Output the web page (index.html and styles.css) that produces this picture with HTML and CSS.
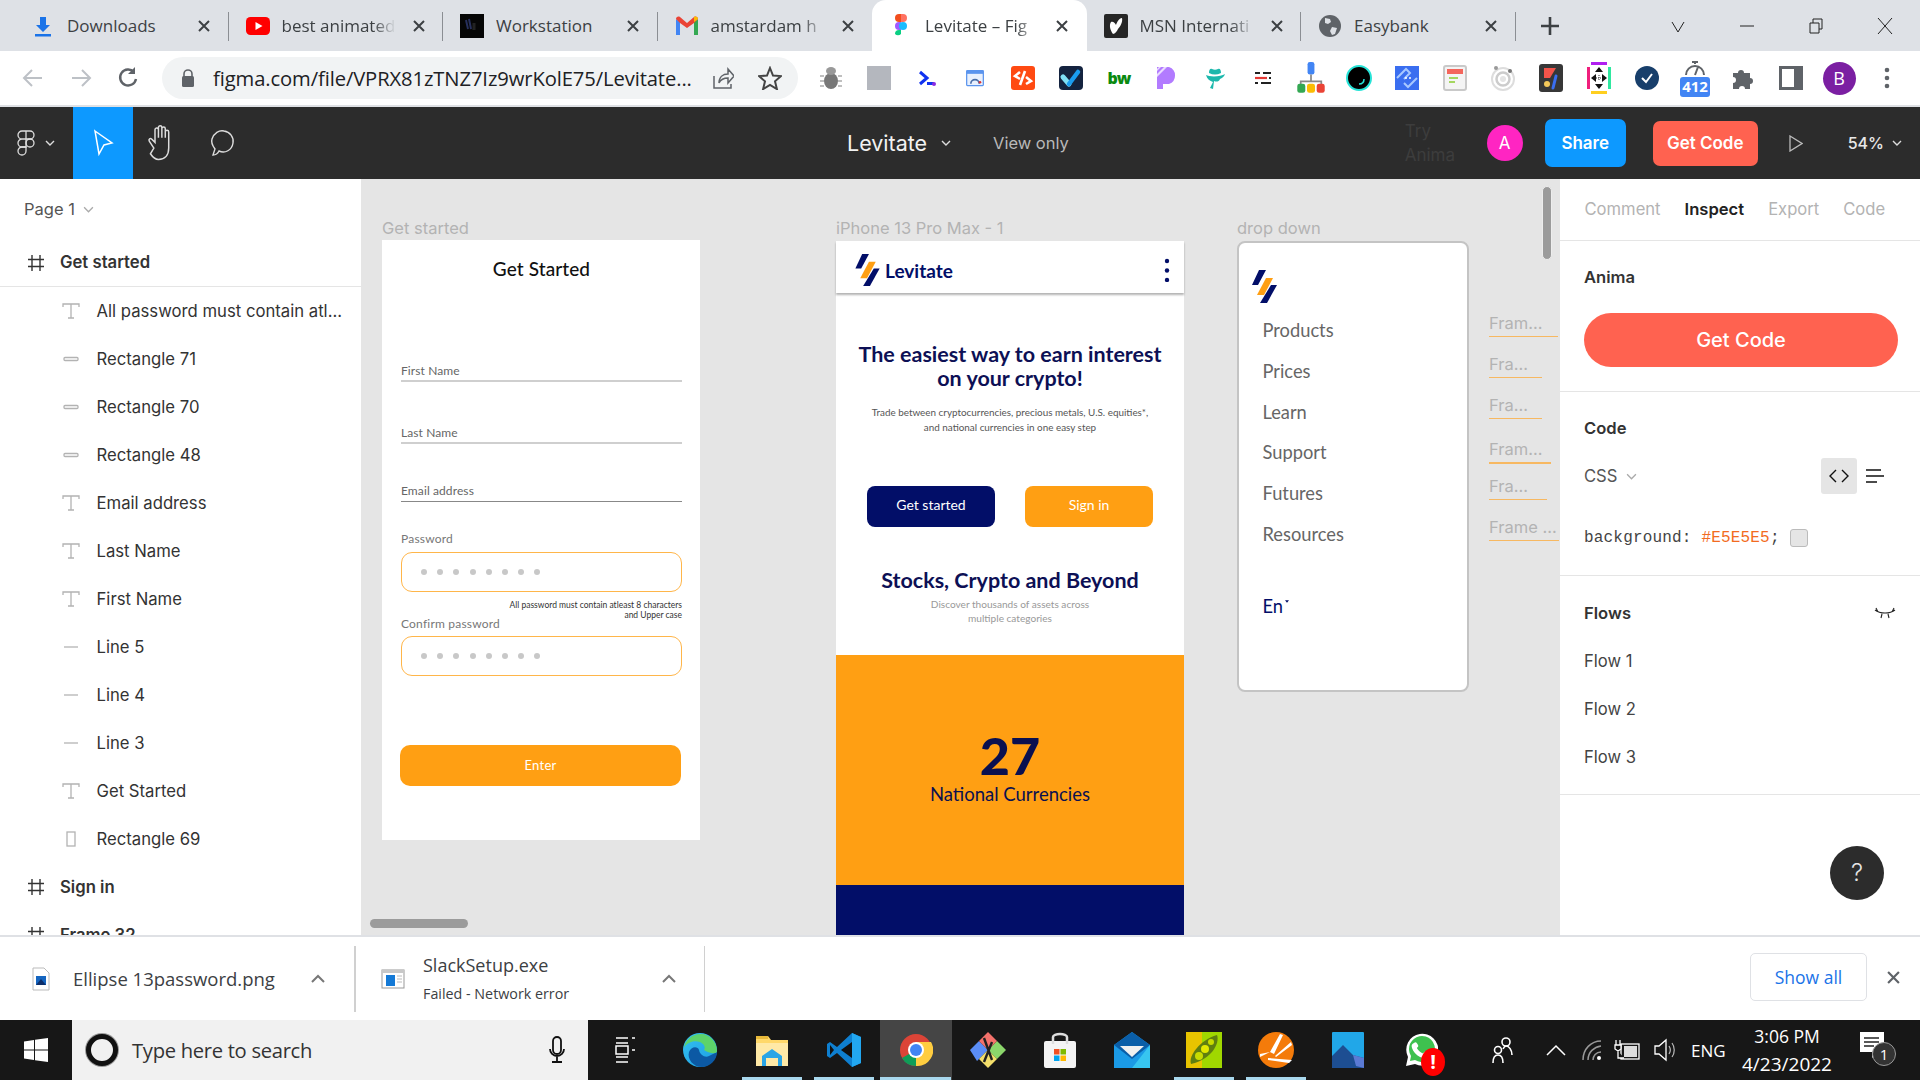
FILE: index.html
```html
<!DOCTYPE html>
<html lang="en">
<head>
<meta charset="utf-8">
<title>Levitate – Figma</title>
<link rel="stylesheet" href="styles.css">
</head>
<body>
<div class="app">

<header class="tabbar">
  <div class="tab sep"><span class="tab-ico"><svg width="24" height="24" viewBox="0 0 24 24"><path d="M9 3h6v8h4l-7 7-7-7h4z" fill="#1a73e8"/><rect x="4" y="20" width="16" height="2.5" fill="#1a73e8"/></svg></span><span class="tab-text">Downloads</span><svg class="x" viewBox="0 0 12 12"><path d="M1 1l10 10M11 1L1 11"/></svg></div>
  <div class="tab sep"><span class="tab-ico"><svg width="24" height="24" viewBox="0 0 24 24"><rect y="3" width="24" height="18" rx="4.5" fill="#f00"/><path d="M9.5 8l7 4-7 4z" fill="#fff"/></svg></span><span class="tab-text fade">best animated</span><svg class="x" viewBox="0 0 12 12"><path d="M1 1l10 10M11 1L1 11"/></svg></div>
  <div class="tab sep"><span class="tab-ico"><svg width="24" height="24" viewBox="0 0 24 24"><rect width="24" height="24" fill="#060606"/><path d="M6 6l2 9M9 5l2 10" stroke="#27305c" stroke-width="2"/><path d="M14 9v7" stroke="#222" stroke-width="3"/></svg></span><span class="tab-text">Workstation</span><svg class="x" viewBox="0 0 12 12"><path d="M1 1l10 10M11 1L1 11"/></svg></div>
  <div class="tab"><span class="tab-ico"><svg width="24" height="24" viewBox="0 0 24 24"><path d="M1 21V5l4 3v13z" fill="#4285f4"/><path d="M23 21V5l-4 3v13z" fill="#34a853"/><path d="M1 5c0-2 2-3 4-2l7 6 7-6c2-1 4 0 4 2l-4 4-7 5-7-5z" fill="#ea4335"/><path d="M19 3c2-1 4 0 4 2l-4 3z" fill="#fbbc04"/></svg></span><span class="tab-text fade">amstardam h</span><svg class="x" viewBox="0 0 12 12"><path d="M1 1l10 10M11 1L1 11"/></svg></div>
  <div class="tab active"><span class="tab-ico"><svg width="24" height="24" viewBox="0 0 16 24"><path d="M2 4a4 4 0 0 1 4-4h4v8H6a4 4 0 0 1-4-4z" fill="#f24e1e"/><path d="M8 0h2a4 4 0 0 1 0 8H8z" fill="#ff7262"/><path d="M2 12a4 4 0 0 1 4-4h2v8H6a4 4 0 0 1-4-4z" fill="#a259ff"/><circle cx="10" cy="12" r="4" fill="#1abcfe"/><path d="M2 20a4 4 0 0 1 4-4h2v4a4 4 0 0 1-6 0z" fill="#0acf83"/></svg></span><span class="tab-text fade">Levitate – Fig</span><svg class="x" viewBox="0 0 12 12"><path d="M1 1l10 10M11 1L1 11"/></svg></div>
  <div class="tab sep"><span class="tab-ico"><svg width="24" height="24" viewBox="0 0 24 24"><rect width="24" height="24" rx="2" fill="#262626"/><path d="M9 20c-3-4-4-9-2-12 2-1 4 1 5 3 1-3 3-7 6-7 1 4-2 9-4 11-1 2-3 5-5 5z" fill="#fff"/></svg></span><span class="tab-text fade">MSN Internati</span><svg class="x" viewBox="0 0 12 12"><path d="M1 1l10 10M11 1L1 11"/></svg></div>
  <div class="tab sep"><span class="tab-ico"><svg width="24" height="24" viewBox="0 0 24 24"><circle cx="12" cy="12" r="11" fill="#5f6368"/><path d="M7 4l5 1 1 3-3 2-3-1zM14 13l5 1-2 6-3 1-2-4z" fill="#dee1e6"/></svg></span><span class="tab-text">Easybank</span><svg class="x" viewBox="0 0 12 12"><path d="M1 1l10 10M11 1L1 11"/></svg></div>
  <svg class="plus" viewBox="0 0 20 20"><path d="M10 1v18M1 10h18"/></svg>
  <div class="win-controls">
    <svg viewBox="0 0 16 16"><path d="M2 4l6 10 6-10"/></svg>
    <svg viewBox="0 0 16 16"><path d="M1 8h14"/></svg>
    <svg viewBox="0 0 16 16"><path d="M2 5h9v10H2zM5 5V1h9v10h-3"/></svg>
    <svg viewBox="0 0 16 16"><path d="M1 0l14 16M15 0L1 16"/></svg>
  </div>
</header>

<nav class="toolbar">
  <div class="nav-btn"><svg viewBox="0 0 24 24" class="dim"><path d="M21 12H4M11 4l-8 8 8 8"/></svg></div>
  <div class="nav-btn"><svg viewBox="0 0 24 24" class="dim"><path d="M3 12h17M13 4l8 8-8 8"/></svg></div>
  <div class="nav-btn"><svg viewBox="0 0 24 24" class="dark"><path d="M19 13a8 8 0 1 1-2-7"/><path d="M18 1v7h-7" fill="#5f6368" stroke="none"/></svg></div>
  <div class="omnibox">
    <svg class="lock" viewBox="0 0 14 18"><path d="M3 8V5a4 4 0 0 1 8 0v3" fill="none" stroke="#5f6368" stroke-width="1.6"/><rect x="1" y="7" width="12" height="11" rx="1.5" fill="#5f6368"/></svg>
    <span class="url">figma.com/file/VPRX81zTNZ7Iz9wrKolE75/Levitate...</span>
    <svg class="omni-ico share-ico" viewBox="0 0 24 24"><path d="M4 10v12h17v-4M9 17c0-6 4-9 9-9V3l6 7-6 7v-5c-4 0-7 1-9 5z" fill="none" stroke="#5f6368" stroke-width="1.5"/></svg>
    <svg class="omni-ico star-ico" viewBox="0 0 24 24"><path d="M12 2l3 7.5 8 .6-6 5.2 1.9 7.8L12 18.900l-6.900 4.200 1.900-7.800-6-5.200 8-.6z" fill="none" stroke="#444" stroke-width="2"/></svg>
  </div>
  <div class="exts">
    <div class="ext"><svg width="24" height="24" viewBox="0 0 24 24"><ellipse cx="12" cy="15" rx="7" ry="8" fill="#777"/><ellipse cx="12" cy="5" rx="5" ry="4" fill="#999"/><path d="M1 10h4M1 15h4M1 20h4M19 10h4M19 15h4M19 20h4" stroke="#aaa" stroke-width="1.4"/></svg></div>
    <div class="ext"><span class="ext-square"></span></div>
    <div class="ext"><svg width="24" height="24" viewBox="0 0 24 24"><path d="M5 6l7 6-7 6" fill="none" stroke="#1032f0" stroke-width="3"/><rect x="12" y="16" width="7" height="3" fill="#1032f0"/><circle cx="19" cy="18" r="2" fill="#8a2be2"/></svg></div>
    <div class="ext"><svg width="20" height="20" viewBox="0 0 24 24"><path d="M2 4a1 1 0 0 1 1-1h18a1 1 0 0 1 1 1v16a1 1 0 0 1-1 1H3a1 1 0 0 1-1-1z" fill="#e8f0fd" stroke="#5a94ee" stroke-width="1.500"/><rect x="2" y="3" width="20" height="4" fill="#5a94ee"/><path d="M7 19a5 5 0 0 1 10 0" fill="none" stroke="#4a6ea8" stroke-width="2"/><circle cx="18" cy="17" r="1.500" fill="#d33"/></svg></div>
    <div class="ext"><svg width="24" height="24" viewBox="0 0 24 24"><rect width="24" height="24" rx="3" fill="#ff4a12"/><path d="M9 6L4 10l5 3M15 11l5 4-5 3M14 5L9 19" fill="none" stroke="#fff" stroke-width="2.600"/></svg></div>
    <div class="ext"><svg width="24" height="24" viewBox="0 0 24 24"><rect width="24" height="24" rx="4" fill="#14233f"/><path d="M4 11l6 7" stroke="#7fe0f6" stroke-width="5" stroke-linecap="round"/><path d="M10 18l9-12" stroke="#1a9cf0" stroke-width="4.500" stroke-linecap="round"/></svg></div>
    <div class="ext"><span class="bw">bw</span></div>
    <div class="ext"><svg width="24" height="24" viewBox="0 0 24 24"><path d="M2 1h12a9 9 0 0 1 0 17H8v5H2z" fill="#b27bff"/><path d="M2 8l7-7h3L2 11zM2 3l2-2h2L2 5z" fill="#eadcff"/></svg></div>
    <div class="ext"><svg width="24" height="24" viewBox="0 0 24 24"><path d="M3 9c3 2 15 2 19-1-1 3-3 4-5 5-1 3-4 3-6 2l-1 8-3-1 3-6c-3-1-6-3-7-7z" fill="#1cb8ac"/><path d="M6 7c0-3 1-5 3-4 2 1 4 1 6 0 2-1 3 1 3 4-4 2-8 2-12 0z" fill="#1cb8ac"/></svg></div>
    <div class="ext"><svg width="24" height="24" viewBox="0 0 24 24"><path d="M4 7h5M12 7h8M4 12h12M18 12h2M4 17h3M10 17h10" stroke="#222" stroke-width="2.200"/><path d="M4 12h12" stroke="#e53935" stroke-width="2.200"/></svg></div>
    <div class="ext"><svg width="28" height="32" viewBox="0 0 24 28"><rect x="9" y="0" width="6" height="11" rx="2" fill="#4285f4"/><path d="M12 11v6M3 21v-4h18v4" fill="none" stroke="#888" stroke-width="1.500"/><rect y="19" width="7" height="8" rx="2" fill="#34a853"/><rect x="8.500" y="19" width="7" height="8" rx="2" fill="#fbbc04"/><rect x="17" y="19" width="7" height="8" rx="2" fill="#ea4335"/></svg></div>
    <div class="ext"><svg width="26" height="26" viewBox="0 0 26 26"><circle cx="13" cy="13" r="12" fill="#000" stroke="#27e3d7" stroke-width="2"/><path d="M13 19c3 0 5-2 5-5" fill="none" stroke="#27e3d7" stroke-width="1.500"/></svg></div>
    <div class="ext"><svg width="24" height="24" viewBox="0 0 24 24"><rect width="24" height="24" fill="#3a6ef0"/><path d="M2 12l9-9 4 4-6 6M22 12l-9 9-4-4" fill="none" stroke="#a8c8ff" stroke-width="2"/><circle cx="11" cy="12" r="1" fill="#fff"/><circle cx="15" cy="12" r="1" fill="#fff"/></svg></div>
    <div class="ext"><svg width="24" height="26" viewBox="0 0 24 26"><rect x="1" y="1" width="22" height="24" rx="2" fill="#f4f4f4" stroke="#c9c9c9" stroke-width="2"/><rect x="4" y="4" width="16" height="5" fill="#f4665c"/><rect x="6" y="12" width="9" height="2" fill="#a4d65e"/><rect x="6" y="16" width="6" height="2" fill="#a4d65e"/></svg></div>
    <div class="ext"><svg width="26" height="26" viewBox="0 0 26 26"><circle cx="13" cy="14" r="11" fill="none" stroke="#ddd" stroke-width="2"/><circle cx="13" cy="14" r="6.500" fill="none" stroke="#ccc" stroke-width="2.500"/><circle cx="13" cy="14" r="3" fill="#e4e4e4"/><circle cx="6" cy="3" r="2" fill="#999"/><circle cx="20" cy="6" r="2" fill="#777"/></svg></div>
    <div class="ext"><svg width="24" height="28" viewBox="0 0 24 28"><rect width="24" height="28" rx="3" fill="#373737"/><path d="M5 4h12l-6 10H5z" fill="#f4544a"/><circle cx="8" cy="20" r="3" fill="#f4c95a"/><path d="M17 12l-3 12" stroke="#3a6ef0" stroke-width="3" stroke-linecap="round"/></svg></div>
    <div class="ext"><svg width="24" height="32" viewBox="0 0 24 32"><rect x="4" y="0" width="16" height="3" fill="#b01ff0"/><rect x="4" y="29" width="16" height="3" fill="#ffcf1f"/><rect x="0" y="5" width="3" height="22" fill="#f01f7c"/><rect x="21" y="5" width="3" height="22" fill="#2fe8a0"/><path d="M12 5l4 5H8zM12 27l4-5H8zM4 16l5-4v8zM20 16l-5-4v8z" fill="#111"/><path d="M9 16h6M12 13v6" stroke="#333" stroke-dasharray="1 1"/></svg></div>
    <div class="ext"><svg width="24" height="24" viewBox="0 0 24 24"><circle cx="12" cy="12" r="12" fill="#183f6b"/><path d="M7 12l4 4 6-8" fill="none" stroke="#fff" stroke-width="2"/></svg></div>
    <div class="ext ext-badge"><svg width="24" height="16" viewBox="0 0 24 16"><path d="M9 1h6M12 1v2M3 14a9 9 0 0 1 18 0M12 14l3-8" fill="none" stroke="#5f6368" stroke-width="2"/></svg><span class="badge">412</span></div>
    <div class="ext"><svg width="24" height="24" viewBox="0 0 24 24"><path d="M2 7h5a3 3 0 1 1 6 0h6v5a3 3 0 1 1 0 6v5h-5a3 3 0 1 0-6 0H2v-6a3 3 0 1 0 0-6z" fill="#5f6368"/></svg></div>
    <div class="ext"><svg width="24" height="24" viewBox="0 0 24 24"><path d="M1.500 1.500h21v21h-21z" fill="none" stroke="#5f6368" stroke-width="3"/><rect x="15" y="2" width="8" height="20" fill="#5f6368"/></svg></div>
    <div class="ext"><span class="avatar-b">B</span></div>
    <div class="ext"><svg width="6" height="24" viewBox="0 0 6 24"><circle cx="3" cy="4" r="2.300" fill="#5f6368"/><circle cx="3" cy="12" r="2.300" fill="#5f6368"/><circle cx="3" cy="20" r="2.300" fill="#5f6368"/></svg></div>
  </div>
</nav>

<div class="figbar">
  <div class="fig-logo">
    <svg width="18" height="26" viewBox="0 0 18 26"><g fill="none" stroke="#ddd" stroke-width="1.300"><path d="M9 1H5a4 4 0 0 0 0 8h4zM9 1h4a4 4 0 0 1 0 8H9zM9 9H5a4 4 0 0 0 0 8h4z"/><circle cx="13" cy="13" r="4"/><path d="M9 17H5a4 4 0 1 0 4 4z"/></g></svg>
    <svg class="chev" viewBox="0 0 10 6"><path d="M1 1l4 4 4-4"/></svg>
  </div>
  <div class="fig-tool on"><svg width="24" height="28" viewBox="0 0 24 28"><path d="M4 2l17 12-8 2-5 9z" fill="none" stroke="#fff" stroke-width="1.500"/></svg></div>
  <div class="fig-tool"><svg width="32" height="39" viewBox="0 0 28 34"><path d="M6 21l-4-6c-1-2 1-3 2-2l3 3V5c0-2 3-2 3 0v7-9c0-2 3-2 3 0v9-8c0-2 3-2 3 0v8-5c0-2 3-2 3 0v14c0 6-3 10-9 10-3 0-5-2-7-5z" fill="none" stroke="#ddd" stroke-width="1.300"/></svg></div>
  <div class="fig-tool"><svg width="28" height="30" viewBox="0 0 28 30"><path d="M4 27l2-6C3 17 2 14 3 11 5 5 10 2 15 3c6 1 10 6 9 12-1 7-8 11-14 8-1 2-3 4-6 4z" fill="none" stroke="#ddd" stroke-width="1.400"/></svg></div>
  <div class="fig-title">Levitate</div>
  <svg class="chev title-chev" viewBox="0 0 10 6"><path d="M1 1l4 4 4-4"/></svg>
  <div class="view-only">View only</div>
  <div class="fig-right">
    <div class="try">Try<br>Anima</div>
    <div class="avatar-a">A</div>
    <div class="btn-share">Share</div>
    <div class="btn-code">Get Code</div>
    <svg class="play" viewBox="0 0 14 17"><path d="M1 1l12 7.500L1 16z"/></svg>
    <div class="zoom-val">54%</div>
    <svg class="chev zoom-chev" viewBox="0 0 10 6"><path d="M1 1l4 4 4-4"/></svg>
  </div>
</div>

<main class="main">
  <aside class="layers">
    <div class="page-row">Page 1 <svg class="chev-g" viewBox="0 0 10 6"><path d="M1 1l4 4 4-4"/></svg></div>
    <div class="row top sel"><svg class="hash" viewBox="0 0 18 18"><path d="M5 1v16M13 1v16M1 5.500h16M1 12.500h16"/></svg>Get started</div>
    <div class="row"><svg class="ic-t" viewBox="0 0 18 18"><path d="M1 5V2h16v3M9 2v14M6 16h6"/></svg>All password must contain atl...</div>
    <div class="row"><svg class="ic-t" viewBox="0 0 18 18"><rect x="2" y="7.500" width="14" height="3" rx="1"/></svg>Rectangle 71</div>
    <div class="row"><svg class="ic-t" viewBox="0 0 18 18"><rect x="2" y="7.500" width="14" height="3" rx="1"/></svg>Rectangle 70</div>
    <div class="row"><svg class="ic-t" viewBox="0 0 18 18"><rect x="2" y="7.500" width="14" height="3" rx="1"/></svg>Rectangle 48</div>
    <div class="row"><svg class="ic-t" viewBox="0 0 18 18"><path d="M1 5V2h16v3M9 2v14M6 16h6"/></svg>Email address</div>
    <div class="row"><svg class="ic-t" viewBox="0 0 18 18"><path d="M1 5V2h16v3M9 2v14M6 16h6"/></svg>Last Name</div>
    <div class="row"><svg class="ic-t" viewBox="0 0 18 18"><path d="M1 5V2h16v3M9 2v14M6 16h6"/></svg>First Name</div>
    <div class="row"><svg class="ic-t" viewBox="0 0 18 18"><path d="M2 9h14"/></svg>Line 5</div>
    <div class="row"><svg class="ic-t" viewBox="0 0 18 18"><path d="M2 9h14"/></svg>Line 4</div>
    <div class="row"><svg class="ic-t" viewBox="0 0 18 18"><path d="M2 9h14"/></svg>Line 3</div>
    <div class="row"><svg class="ic-t" viewBox="0 0 18 18"><path d="M1 5V2h16v3M9 2v14M6 16h6"/></svg>Get Started</div>
    <div class="row"><svg class="ic-t" viewBox="0 0 18 18"><rect x="5" y="2" width="8" height="14"/></svg>Rectangle 69</div>
    <div class="row top"><svg class="hash" viewBox="0 0 18 18"><path d="M5 1v16M13 1v16M1 5.500h16M1 12.500h16"/></svg>Sign in</div>
    <div class="row top"><svg class="hash" viewBox="0 0 18 18"><path d="M5 1v16M13 1v16M1 5.500h16M1 12.500h16"/></svg>Frame 32</div>
  </aside>

  <section class="canvas">
    <div class="lbl lbl-a">Get started</div>
    <div class="frame-a">
      <div class="a-title">Get Started</div>
      <div class="field f-first">First Name</div>
      <div class="field f-last">Last Name</div>
      <div class="field f-email">Email address</div>
      <div class="pw-label">Password</div>
      <div class="pw"><i></i><i></i><i></i><i></i><i></i><i></i><i></i><i></i></div>
      <div class="pw-note">All password must contain atleast 8 characters<br>and Upper case</div>
      <div class="pw-label confirm">Confirm password</div>
      <div class="pw"><i></i><i></i><i></i><i></i><i></i><i></i><i></i><i></i></div>
      <div class="enter">Enter</div>
    </div>

    <div class="lbl lbl-b">iPhone 13 Pro Max - 1</div>
    <div class="frame-b">
      <div class="p-head">
        <svg class="logo" viewBox="0 0 25 33"><path d="M7 0h7L6 15H0z" fill="#020e68"/><path d="M14 8h7L12 25H5z" fill="#ff9f13"/><path d="M19 15h6L15 33H8z" fill="#020e68"/></svg>
        <span class="p-brand">Levitate</span>
        <svg class="kebab" viewBox="0 0 6 24"><circle cx="3" cy="3" r="2.200"/><circle cx="3" cy="12.500" r="2.200"/><circle cx="3" cy="22" r="2.200"/></svg>
      </div>
      <h1 class="p-h1">The easiest way to earn interest<br>on your crypto!</h1>
      <p class="p-sub">Trade between cryptocurrencies, precious metals, U.S. equities*,<br>and national currencies in one easy step</p>
      <div class="p-btns"><div class="p-btn navy">Get started</div><div class="p-btn orange">Sign in</div></div>
      <h2 class="p-h2">Stocks, Crypto and Beyond</h2>
      <p class="p-sub2">Discover thousands of assets across<br>multiple categories</p>
      <div class="p-orange"><div class="p-num">27</div><div class="p-cur">National Currencies</div></div>
      <div class="p-navy"></div>
    </div>

    <div class="lbl lbl-c">drop down</div>
    <div class="frame-c">
      <svg class="logo2" viewBox="0 0 25 33"><path d="M7 0h7L6 15H0z" fill="#020e68"/><path d="M14 8h7L12 25H5z" fill="#ff9f13"/><path d="M19 15h6L15 33H8z" fill="#020e68"/></svg>
      <div class="menu-item">Products</div>
      <div class="menu-item">Prices</div>
      <div class="menu-item">Learn</div>
      <div class="menu-item">Support</div>
      <div class="menu-item">Futures</div>
      <div class="menu-item">Resources</div>
      <div class="lang">En<svg viewBox="0 0 6 4"><path d="M0 0h6L3 4z"/></svg></div>
    </div>

    <div class="mini m1">Fram...</div>
    <div class="mini m2">Fra...</div>
    <div class="mini m3">Fra...</div>
    <div class="mini m4">Fram...</div>
    <div class="mini m5">Fra...</div>
    <div class="mini m6">Frame ...</div>

    <div class="vscroll"></div>
    <div class="hscroll"></div>
  </section>

  <aside class="inspect">
    <div class="i-tabs"><span>Comment</span><span class="cur">Inspect</span><span>Export</span><span>Code</span></div>
    <div class="i-sec anima">
      <div class="i-h">Anima</div>
      <div class="i-cta">Get Code</div>
    </div>
    <div class="i-sec code">
      <div class="i-h">Code</div>
      <div class="css-row">
        <span class="css-name">CSS</span><svg class="chev-g" viewBox="0 0 10 6"><path d="M1 1l4 4 4-4"/></svg>
        <span class="code-btn"><svg width="20" height="14" viewBox="0 0 20 14"><path d="M7 1L1 7l6 6M13 1l6 6-6 6" fill="none" stroke="#111" stroke-width="1.400"/></svg></span>
        <svg class="list-ic" width="18" height="14" viewBox="0 0 18 14"><path d="M0 1h15M0 7h18M0 13h11" stroke="#111" stroke-width="1.400"/></svg>
      </div>
      <div class="code-line">background: <span class="hex">#E5E5E5</span>;<i class="swatch"></i></div>
    </div>
    <div class="i-sec flows">
      <div class="flows-head"><span class="i-h">Flows</span><svg width="22" height="12" viewBox="0 0 22 12"><path d="M1 3c5 4 15 4 20 0M4 5L2 1M8 7l-1 4M14 7l1 4M18 5l2-4" fill="none" stroke="#222" stroke-width="1.100"/></svg></div>
      <div class="flow">Flow 1</div>
      <div class="flow">Flow 2</div>
      <div class="flow">Flow 3</div>
    </div>
    <div class="help">?</div>
  </aside>
</main>

<footer class="dlbar">
  <div class="dl d1">
    <svg width="18" height="24" viewBox="0 0 18 24"><path d="M1 1h11l5 5v17H1z" fill="#fff" stroke="#bbb"/><rect x="4" y="9" width="10" height="9" fill="#1565c0"/><path d="M4 18l5-6 5 6z" fill="#0d2f6b"/></svg>
    <span class="dl-name">Ellipse 13password.png</span>
    <svg class="caret" viewBox="0 0 14 9"><path d="M1 8l6-6 6 6"/></svg>
  </div>
  <div class="dl d2">
    <svg width="24" height="20" viewBox="0 0 24 20"><rect x="1" y="1" width="22" height="18" fill="#fff" stroke="#999"/><rect x="1" y="1" width="22" height="3" fill="#c8c8c8"/><rect x="5" y="6" width="9" height="11" fill="#1479d6"/><path d="M16 7h5M16 10h5M16 13h5" stroke="#bbb"/></svg>
    <div class="dl-text"><div class="dl-name2">SlackSetup.exe</div><div class="dl-err">Failed - Network error</div></div>
    <svg class="caret" viewBox="0 0 14 9"><path d="M1 8l6-6 6 6"/></svg>
  </div>
  <div class="show-all">Show all</div>
  <svg class="dl-x" viewBox="0 0 12 12"><path d="M1 1l10 10M11 1L1 11"/></svg>
</footer>

<footer class="taskbar">
  <div class="start"><svg width="24" height="24" viewBox="0 0 24 24"><path d="M0 3.500l10-1.500v9.500H0zM11 1.800L24 0v11.500H11zM0 12.500h10V22L0 20.500zM11 12.500h13V24l-13-1.800z" fill="#fff"/></svg></div>
  <div class="search">
    <span class="cortana"></span>
    <span class="search-text">Type here to search</span>
    <svg class="mic" width="16" height="28" viewBox="0 0 16 28"><rect x="4" y="1" width="8" height="17" rx="4" fill="none" stroke="#111" stroke-width="1.800"/><path d="M1 13a7 7 0 0 0 14 0M8 20v5M3 26h10" fill="none" stroke="#111" stroke-width="1.800"/></svg>
  </div>
  <div class="task-view"><svg width="24" height="26" viewBox="0 0 24 26"><path d="M2 1h12M2 6h12M2 20h12M2 25h12M2 9h12v8H2z M18 1h3M18 13h3" fill="none" stroke="#fff" stroke-width="1.500"/></svg></div>
  <div class="app-ic"><svg width="36" height="36" viewBox="0 0 36 36"><defs><linearGradient id="e1" x1="0" y1="0" x2="1" y2="1"><stop offset="0" stop-color="#35c1f1"/><stop offset="1" stop-color="#1b9de2"/></linearGradient></defs><circle cx="18" cy="18" r="17" fill="url(#e1)"/><path d="M35 20c0 8-7 15-15 15-9 0-15-8-13-15 2-6 9-6 10-2 1 5 6 8 10 6z" fill="#0c59a4"/><path d="M35 19c0-9-7-17-16-17C9 2 3 9 2 16c3-6 10-8 16-6 4 2 6 5 4 8 4 3 13 5 13 1z" fill="#5dd36b"/></svg></div>
  <div class="app-ic line"><svg width="36" height="32" viewBox="0 0 36 32"><path d="M2 2h12l3 4h17v26H2z" fill="#ffd86a"/><rect x="2" y="9" width="32" height="23" fill="#ffe9a6"/><path d="M8 22l10-7 10 7v10H24v-8H12v8H8z" fill="#2aa5e6"/><rect x="2" y="2" width="12" height="3" fill="#e8b93a"/></svg></div>
  <div class="app-ic line"><svg width="36" height="36" viewBox="0 0 36 36"><path d="M26 1l9 4v26l-9 4-15-14-7 5-3-2V12l3-2 7 5z" fill="#0e7fd0"/><path d="M26 1v34l9-4V5z" fill="#22a7f0"/><path d="M26 10L15 18l11 8z" fill="#111"/><path d="M4 13v10l4-5z" fill="#111"/></svg></div>
  <div class="app-ic cur line"><svg width="34" height="34" viewBox="0 0 34 34"><circle cx="17" cy="17" r="16" fill="#db4437"/><path d="M17 17L3 25A16 16 0 0 0 17 33z" fill="#0f9d58"/><path d="M17 9h15a16 16 0 0 1-15 24z" fill="#ffcd40"/><circle cx="17" cy="17" r="8" fill="#fff"/><circle cx="17" cy="17" r="6" fill="#4285f4"/></svg></div>
  <div class="app-ic"><svg width="36" height="36" viewBox="0 0 36 36"><path d="M18 18L7 29 0 18l9-9z" fill="#5b8df6"/><path d="M18 18l9-9 9 9-9 9z" fill="#8bd66b"/><path d="M18 18L9 9l9-9 9 9z" fill="#f4716b"/><path d="M18 18l-9 9 9 9 9-9z" fill="#f4df6b"/><path d="M14 6l8 22M22 10l-8 20" stroke="#222" stroke-width="2.400"/></svg></div>
  <div class="app-ic"><svg width="34" height="36" viewBox="0 0 34 36"><rect x="1" y="9" width="32" height="27" rx="2" fill="#f4f4f4"/><path d="M10 12V5a7 3 0 0 1 14 0v7" fill="none" stroke="#ddd" stroke-width="2.500"/><rect x="11" y="17" width="5.500" height="5.500" fill="#f25022"/><rect x="17.500" y="17" width="5.500" height="5.500" fill="#7fba00"/><rect x="11" y="23.500" width="5.500" height="5.500" fill="#00a4ef"/><rect x="17.500" y="23.500" width="5.500" height="5.500" fill="#ffb900"/></svg></div>
  <div class="app-ic"><svg width="36" height="36" viewBox="0 0 36 36"><path d="M18 0L0 13v23h36V13z" fill="#1b9ae6"/><path d="M0 13l18 14 18-14L18 0z" fill="#0a5ea8"/><path d="M6 14h24L18 25z" fill="#f0f0f0"/><path d="M18 36l18-23v23z" fill="#37c5f0"/></svg></div>
  <div class="app-ic line2"><svg width="36" height="36" viewBox="0 0 36 36"><rect width="36" height="36" fill="#a0d800"/><rect width="16" height="36" fill="#e8c400"/><path d="M5 32C2 24 14 8 31 3c3 8-5 24-26 29z" fill="#5f7f10"/><circle cx="13" cy="24" r="4" fill="#c8dc00"/><circle cx="19" cy="17" r="4" fill="#e2e800"/><circle cx="25" cy="10" r="3" fill="#c8dc00"/></svg></div>
  <div class="app-ic line2"><svg width="36" height="36" viewBox="0 0 36 36"><ellipse cx="18" cy="18" rx="18" ry="18" fill="#f47b0a"/><path d="M12 20L22 2l3 1-9 19zM17 24L33 10l1 3-16 12zM10 26l24 2-3 3-21-3zM2 22l10-2-10 5z" fill="#fff"/></svg></div>
  <div class="app-ic"><svg width="32" height="36" viewBox="0 0 32 36"><rect width="32" height="36" rx="1" fill="#21a7e8"/><path d="M0 36V24L11 13l10 10 11 3v10z" fill="#1d4e92"/><path d="M21 23l11 3v10l-8-2z" fill="#5b7ad4"/></svg></div>
  <div class="app-ic wa"><svg width="36" height="36" viewBox="0 0 36 36"><path d="M4 34l2-9A16 16 0 1 1 13 32z" fill="#fff"/><path d="M8 29l1-5A13 13 0 1 1 13 28z" fill="#3ec14f"/><path d="M12 11c2-2 3 0 4 2s-1 2-1 3 3 4 5 5 2-2 3-1 4 2 3 4-4 3-8 1-7-6-8-9 0-4 2-5z" fill="#fff"/></svg><span class="wa-alert">!</span></div>
  <div class="tray">
    <svg class="t-people" width="24" height="28" viewBox="0 0 24 28"><circle cx="15" cy="6" r="4" fill="none" stroke="#fff" stroke-width="1.600"/><circle cx="7" cy="14" r="3.500" fill="none" stroke="#fff" stroke-width="1.600"/><path d="M2 27c0-5 2-8 5-8s5 3 5 8M12 13c1-2 2-3 3-3 3 0 6 4 6 9" fill="none" stroke="#fff" stroke-width="1.600"/></svg>
    <svg class="t-caret" width="20" height="12" viewBox="0 0 20 12"><path d="M1 11l9-9 9 9" fill="none" stroke="#fff" stroke-width="1.500"/></svg>
    <svg class="t-wifi" width="22" height="22" viewBox="0 0 22 22"><path d="M2 21C2 10 10 2 20 2M7 21c0-8 6-13 13-14M12 21c0-4 3-8 8-8" fill="none" stroke="#999" stroke-width="1.500"/><circle cx="18" cy="19" r="2" fill="#fff"/></svg>
    <svg class="t-batt" width="26" height="22" viewBox="0 0 26 22"><rect x="7" y="5" width="18" height="15" fill="none" stroke="#fff" stroke-width="1.300"/><rect x="10" y="7" width="13" height="11" fill="#fff" opacity=".85"/><path d="M2 1v5M6 1v5M1 6h6v4l-3 2-3-2zM4 12v7h6" fill="#111" stroke="#fff" stroke-width="1.300"/></svg>
    <svg class="t-vol" width="24" height="24" viewBox="0 0 24 24"><path d="M1 8h4l7-6v20l-7-6H1z" fill="none" stroke="#fff" stroke-width="1.300"/><path d="M15 8c2 3 2 5 0 8M18 5c3 4 3 10 0 14" fill="none" stroke="#bbb" stroke-width="1.200"/></svg>
    <span class="t-lang">ENG</span>
    <div class="t-clock"><div>3:06 PM</div><div class="t-date">4/23/2022</div></div>
    <div class="t-notif"><svg width="24" height="30" viewBox="0 0 24 30"><path d="M0 0h24v20h-6l-6 6v-6H0z" fill="#fff"/><path d="M4 6h15M4 10h15M4 14h10" stroke="#222" stroke-width="1.400"/></svg><span class="t-count">1</span></div>
  </div>
</footer>

</div>
</body>
</html>
```

FILE: styles.css
```css
* { box-sizing: border-box; }
html, body { margin: 0; padding: 0; background: #fff; }
.app { width: 1920px; height: 1080px; display: flex; flex-direction: column; overflow: hidden; font-family: Inter, "Liberation Sans", sans-serif; }

/* browser tabs */
.tabbar { height: 51px; background: #dee1e6; display: flex; align-items: center; padding-left: 14px; flex: none; }
.tab { width: 214.5px; height: 51px; display: flex; align-items: center; padding-left: 17px; position: relative; flex: none; }
.tab.sep::after { content: ""; position: absolute; right: 0; top: 12px; height: 29px; width: 1px; background: #8b8e93; }
.tab.active { background: #fff; border-radius: 14px 14px 0 0; }
.tab-ico { width: 24px; height: 24px; flex: none; display: flex; }
.tab-text { width: 114px; margin-left: 12px; white-space: nowrap; overflow: hidden; font: 17px "Open Sans", sans-serif; color: #3c4043; flex: none; }
.tab-text.fade { -webkit-mask-image: linear-gradient(90deg, #000 80%, transparent 100%); mask-image: linear-gradient(90deg, #000 80%, transparent 100%); }
.x { width: 12px; height: 12px; margin-left: 17px; flex: none; }
.x path { stroke: #3c4043; stroke-width: 2; fill: none; }
.plus { width: 20px; height: 20px; margin-left: 24px; flex: none; }
.plus path { stroke: #3c4043; stroke-width: 2.6; fill: none; }
.win-controls { margin-left: auto; display: flex; align-items: center; gap: 53px; padding-right: 27px; }
.win-controls svg { width: 16px; height: 16px; }
.win-controls path { fill: none; stroke: #222; stroke-width: 1; }

/* address bar */
.toolbar { height: 56px; flex: none; display: flex; align-items: center; background: #fff; border-bottom: 2px solid #dfe1e5; }
.nav-btn { width: 48px; height: 48px; flex: none; display: flex; align-items: center; justify-content: center; }
.nav-btn:first-child { margin-left: 9px; }
.nav-btn svg { width: 24px; height: 24px; fill: none; stroke-width: 2; }
.nav-btn .dim { stroke: #bdc1c6; }
.nav-btn .dark { stroke: #5f6368; stroke-width: 2.4; }
.omnibox { margin-left: 9px; width: 636px; height: 42px; background: #f1f3f4; border-radius: 21px; display: flex; align-items: center; padding-left: 19px; flex: none; }
.lock { width: 14px; height: 18px; flex: none; }
.url { margin-left: 18px; width: 484px; font: 20.2px "Open Sans", sans-serif; color: #202124; white-space: nowrap; overflow: hidden; flex: none; letter-spacing: -0.1px; }
.omni-ico { width: 24px; height: 24px; flex: none; }
.share-ico { margin-left: 13px; }
.star-ico { margin-left: 24px; }
.exts { margin-left: 9px; display: flex; flex: none; }
.ext { width: 48px; height: 48px; display: flex; align-items: center; justify-content: center; flex: none; }
.ext-square { width: 24px; height: 24px; background: #b4b7be; }
.bw { font: 800 16px/1 "Open Sans", sans-serif; color: #0a8a10; letter-spacing: -1px; }
.ext-badge { flex-direction: column; justify-content: flex-start; padding-top: 7px; }
.badge { background: #4285f4; color: #fff; font: 700 15px/19px "Open Sans", sans-serif; width: 30px; height: 20px; text-align: center; border-radius: 3px; }
.avatar-b { width: 33px; height: 33px; border-radius: 50%; background: #7b1fa2; color: #fff; font: 18px/33px "Open Sans", sans-serif; text-align: center; }

/* figma bar */
.figbar { height: 72px; flex: none; background: #2c2c2c; display: flex; align-items: center; }
.fig-logo { width: 73px; height: 72px; display: flex; align-items: center; padding-left: 17px; gap: 10px; flex: none; }
.chev { width: 10px; height: 6px; flex: none; }
.chev path { fill: none; stroke: #ddd; stroke-width: 1.4; }
.fig-tool { width: 60px; height: 72px; display: flex; align-items: center; justify-content: center; flex: none; }
.fig-tool.on { background: #0d99ff; }
.fig-title { margin-left: 594px; font-size: 21.5px; color: #f2f2f2; width: 85px; }
.title-chev { margin-left: 9px; }
.view-only { margin-left: 42px; font-size: 16.5px; color: #b9b9b9; }
.fig-right { margin-left: auto; display: flex; align-items: center; height: 72px; }
.try { color: #3d3d3d; font-size: 17px; line-height: 24px; width: 82px; margin-left: 2px; }
.avatar-a { width: 36px; height: 36px; border-radius: 50%; background: #ff25c2; color: #fff; text-align: center; font-size: 17px; line-height: 36px; }
.btn-share { margin-left: 22px; width: 81px; height: 48px; background: #0d99ff; border-radius: 7px; color: #fff; font-size: 17px; font-weight: 600; line-height: 48px; text-align: center; }
.btn-code { margin-left: 27px; width: 105px; height: 45px; background: #ff6250; border-radius: 7px; color: #fff; font-size: 17px; font-weight: 600; line-height: 45px; text-align: center; }
.play { width: 14px; height: 17px; margin-left: 31px; }
.play path { fill: none; stroke: #bbb; stroke-width: 1.3; }
.zoom-val { margin-left: 45px; font-size: 16px; color: #e8e8e8; font-weight: 500; }
.zoom-chev { margin-left: 8px; margin-right: 18px; }

/* main */
.main { height: 756px; flex: none; display: flex; position: relative; overflow: hidden; }
.layers { width: 361px; flex: none; background: #fff; overflow: hidden; }
.page-row { height: 60px; display: flex; align-items: center; padding-left: 24px; font-size: 16.5px; color: #555; gap: 8px; }
.chev-g { width: 11px; height: 7px; flex: none; }
.chev-g path { fill: none; stroke: #aaa; stroke-width: 1.2; }
.row { height: 48px; display: flex; align-items: center; padding-left: 96.5px; font-size: 16.7px; color: #333; position: relative; white-space: nowrap; }
.row .ic-t { position: absolute; left: 62px; top: 15px; width: 18px; height: 18px; fill: none; stroke: #b3b3b3; stroke-width: 1.3; }
.row.top { padding-left: 60px; font-weight: 600; color: #333; }
.row.sel { border-bottom: 1px solid #e5e5e5; padding-bottom: 2px; }
.hash { position: absolute; left: 27px; top: 15px; width: 18px; height: 18px; fill: none; stroke: #333; stroke-width: 1.4; }

/* canvas */
.canvas { flex: 1; background: #e5e5e5; position: relative; overflow: hidden; font-family: Lato, "Open Sans", sans-serif; }
.lbl { position: absolute; font: 16.5px/20px Inter, sans-serif; color: #b3b3b3; white-space: nowrap; }
.lbl-a { left: 21px; top: 39px; }
.lbl-b { left: 475px; top: 39px; }
.lbl-c { left: 876px; top: 39px; }

.frame-a { position: absolute; left: 21px; top: 61px; width: 318px; height: 600px; background: #fff; padding: 17px 18px 0 19px; }
.a-title { text-align: center; font-size: 19px; line-height: 24px; color: #111; font-weight: 500; letter-spacing: .1px; }
.field { font-size: 12px; line-height: 16px; color: #666; letter-spacing: .1px; height: 19px; border-bottom: 2px solid #cfcfcf; }
.f-first { margin-top: 82px; }
.f-last { margin-top: 43px; }
.f-email { margin-top: 39px; border-bottom: 1px solid #888; }
.pw-label { font-size: 12px; line-height: 16px; color: #777; letter-spacing: .2px; margin-top: 29px; }
.pw-label.confirm { margin-top: -4px; }
.pw { height: 40px; margin-top: 5px; border: 1px solid #ffb64a; border-radius: 11px; display: flex; align-items: center; padding-left: 19px; gap: 10.2px; }
.confirm + .pw { margin-top: 4px; }
.pw i { width: 6px; height: 6px; border-radius: 50%; background: #c8c8c8; }
.pw-note { margin-top: 8px; text-align: right; font-size: 8.5px; line-height: 10px; color: #333; white-space: nowrap; }
.enter { margin: 69px 1px 0 -1px; height: 41px; background: #ff9f13; border-radius: 10px; color: #fff; font-size: 13px; line-height: 41px; text-align: center; letter-spacing: .3px; }

.frame-b { position: absolute; left: 475px; top: 62px; width: 348px; height: 760px; background: #fff; color: #0d1055; text-align: center; }
.p-head { height: 52px; background: #fff; display: flex; align-items: center; padding: 6px 0 0 19px; box-shadow: 0 2px 2px rgba(0, 0, 0, .3); }
.logo { width: 25px; height: 32px; flex: none; }
.p-brand { margin-left: 5px; font-size: 19px; font-weight: 700; color: #020e68; }
.kebab { width: 6px; height: 24px; margin-left: auto; margin-right: 14px; fill: #020e68; }
.p-h1 { margin: 49px 0 0; font-size: 21.5px; line-height: 24px; font-weight: 700; }
.p-sub { margin: 15px 0 0; font-size: 9.9px; line-height: 15px; color: #555; }
.p-btns { margin-top: 51px; padding: 0 31px; display: flex; gap: 30px; }
.p-btn { width: 128px; height: 41px; border-radius: 8px; color: #fff; font-size: 14px; line-height: 37px; }
.p-btn.navy { background: #020e68; }
.p-btn.orange { background: #ff9f13; }
.p-h2 { margin: 40px 0 0; font-size: 21.5px; line-height: 26px; font-weight: 700; }
.p-sub2 { margin: 5px 0 0; font-size: 10.1px; line-height: 13.5px; color: #999; }
.p-orange { margin-top: 30px; height: 230px; background: #ff9f13; padding-top: 75px; }
.p-num { font-size: 52px; line-height: 50px; font-weight: 900; color: #0a1050; }
.p-cur { margin-top: 2px; font-size: 18.5px; line-height: 24px; color: #0a1050; }
.p-navy { height: 60px; background: #020e68; }

.frame-c { position: absolute; left: 876px; top: 62px; width: 232px; height: 451px; background: #fff; border: 2px solid #c4c4c4; border-radius: 8px; padding: 27px 0 0 23.5px; }
.logo2 { display: block; width: 25px; height: 33px; margin: 0 0 7px -10.5px; }
.menu-item { font-size: 18.3px; line-height: 40.8px; color: #666; }
.lang { margin-top: 39px; font-size: 18.3px; line-height: 24px; color: #020e68; display: flex; }
.lang svg { width: 4px; height: 3px; margin: 6px 0 0 2px; fill: #020e68; }

.mini { position: absolute; font: 16.5px/20px Inter, sans-serif; color: #b3b3b3; left: 1128px; padding-bottom: 3px; border-bottom: 1px solid #f7b861; white-space: nowrap; overflow: hidden; }
.m1 { top: 134px; width: 69px; }
.m2 { top: 175px; width: 53px; }
.m3 { top: 216px; width: 53px; }
.m4 { top: 260px; width: 62px; border-bottom-width: 2px; }
.m5 { top: 297px; width: 58px; }
.m6 { top: 338px; width: 70px; }

.vscroll { position: absolute; left: 1181px; top: 7px; width: 10px; height: 74px; border-radius: 5px; background: #9b9b9b; border: 1px solid #ededed; }
.hscroll { position: absolute; left: 9px; top: 740px; width: 98px; height: 9px; border-radius: 5px; background: #9b9b9b; }

/* inspect panel */
.inspect { width: 360px; flex: none; background: #fff; position: relative; color: #333; font-size: 16.6px; }
.i-tabs { height: 62px; display: flex; align-items: center; gap: 24px; padding: 0 0 2px 24.5px; border-bottom: 1px solid #e5e5e5; color: #b3b3b3; }
.i-tabs .cur { color: #222; font-weight: 600; }
.i-sec { border-bottom: 1px solid #e5e5e5; padding: 26px 0 0 24px; }
.i-h { font-weight: 600; line-height: 20px; color: #333; }
.anima { height: 151px; }
.i-cta { margin-top: 26px; width: 314px; height: 54px; border-radius: 27px; background: #ff6250; color: #fff; font-size: 20px; font-weight: 500; line-height: 54px; text-align: center; }
.code { height: 184px; }
.css-row { margin-top: 20px; height: 36px; display: flex; align-items: center; position: relative; color: #555; }
.css-name { margin-right: 9px; }
.code-btn { margin-left: auto; width: 36px; height: 36px; background: #e5e5e5; border-radius: 3px; display: flex; align-items: center; justify-content: center; flex: none; }
.list-ic { margin: 0 36px 0 9px; flex: none; }
.code-line { margin-top: 34px; font: 16px/20px "Liberation Mono", monospace; color: #444; white-space: pre; letter-spacing: .18px; }
.hex { color: #f26b21; }
.swatch { display: inline-block; vertical-align: top; width: 18px; height: 18px; background: #e5e5e5; border: 1px solid #bbb; border-radius: 3px; margin: 1px 0 0 10px; }
.flows { height: 219px; padding-top: 27px; }
.flows-head { display: flex; align-items: center; justify-content: space-between; padding-right: 24px; margin-bottom: 14px; }
.flow { line-height: 48px; color: #444; }
.help { position: absolute; right: 36px; bottom: 35px; width: 54px; height: 54px; border-radius: 50%; background: #2c2c2c; color: #e5e5e5; font-size: 24px; font-weight: 300; text-align: center; line-height: 54px; }

/* download shelf */
.dlbar { height: 85px; flex: none; background: #fff; border-top: 2px solid #dfe1e5; display: flex; align-items: center; font-family: "Open Sans", sans-serif; color: #3c4043; }
.dl { height: 66px; display: flex; align-items: center; border-right: 1px solid #d0d0d0; flex: none; position: relative; }
.d1 { width: 356px; padding-left: 32px; border-right-width: 2px; }
.d2 { width: 349px; padding-left: 25px; }
.dl-name { margin-left: 23px; font-size: 18.5px; white-space: nowrap; width: 228px; }
.caret { width: 14px; height: 9px; flex: none; }
.caret path { fill: none; stroke: #777; stroke-width: 2; }
.d1 .caret { margin-left: 10px; }
.dl-text { margin-left: 18px; width: 239px; }
.dl-name2 { font-size: 18px; line-height: 26px; }
.dl-err { font-size: 14.3px; line-height: 22px; margin-top: 5px; }
.show-all { margin: -3px 0 0 auto; width: 117px; height: 48px; border: 1px solid #dfe1e5; border-radius: 5px; color: #1a73e8; font-size: 17.5px; line-height: 46px; text-align: center; }
.dl-x { width: 13px; height: 13px; margin: -3px 20px 0 20px; flex: none; }
.dl-x path { stroke: #5f6368; stroke-width: 2; fill: none; }

/* taskbar */
.taskbar { height: 60px; flex: none; background: #171717; display: flex; align-items: stretch; font-family: "Open Sans", sans-serif; }
.start { width: 72px; display: flex; align-items: center; justify-content: center; flex: none; }
.search { width: 516px; background: #f1f1f1; display: flex; align-items: center; padding-left: 14px; flex: none; }
.cortana { width: 32px; height: 32px; border-radius: 50%; border: 5px solid #111; box-shadow: 0 0 0 1px #999; flex: none; background: #f1f1f1; }
.search-text { margin-left: 14px; font-size: 20.2px; color: #333; white-space: nowrap; width: 416px; letter-spacing: -.3px; }
.mic { flex: none; margin-left: 1px; }
.task-view { width: 76px; display: flex; align-items: center; justify-content: center; flex: none; }
.app-ic { width: 72px; display: flex; align-items: center; justify-content: center; flex: none; position: relative; }
.app-ic.cur { background: #454545; }
.app-ic.line::after, .app-ic.line2::after { content: ""; position: absolute; left: 6px; right: 6px; bottom: 0; height: 3px; background: #a9d8ee; }
.app-ic.cur::after { left: 0; right: 1px; }
.wa-alert { position: absolute; left: 37px; top: 28px; width: 24px; height: 28px; border-radius: 50%; background: #f00; color: #fff; font-weight: 700; font-size: 20px; line-height: 28px; text-align: center; }
.tray { flex: 1; display: flex; align-items: center; color: #fff; position: relative; }
.t-people { margin-left: 34.5px; flex: none; }
.t-caret { margin-left: 31px; flex: none; }
.t-wifi { margin-left: 15.5px; flex: none; }
.t-batt { margin-left: 11px; flex: none; }
.t-vol { margin-left: 14px; flex: none; }
.t-lang { margin-left: 13px; font-size: 17px; flex: none; width: 46px; }
.t-clock { margin-left: 2px; width: 96px; text-align: center; font-size: 17.5px; line-height: 28px; flex: none; }
.t-date { font-size: 19px; }
.t-notif { margin-left: 25px; position: relative; width: 28px; height: 36px; flex: none; }
.t-count { position: absolute; left: 12px; top: 10px; width: 24px; height: 24px; border-radius: 50%; background: #333; border: 1px solid #999; font-size: 15px; line-height: 22px; text-align: center; }
```
